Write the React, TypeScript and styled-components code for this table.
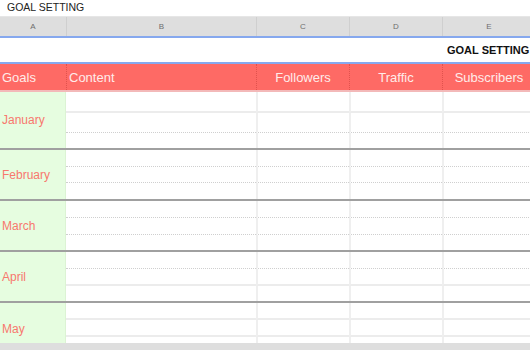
import React from "react";
import styled, { createGlobalStyle } from "styled-components";

const Global = createGlobalStyle`
  html, body { margin: 0; padding: 0; background: #ffffff; }
  body { font-family: "Liberation Sans", Arial, sans-serif; overflow: hidden; }
  #root { width: 530px; height: 350px; overflow: hidden; }
`;

const COLS = "66px 190px 93px 93px 93px";

const Page = styled.div`
  position: relative;
  width: 530px;
  height: 350px;
  overflow: hidden;
  display: flex;
  flex-direction: column;
  background: #fff;
`;

const Title = styled.div`
  height: 16px;
  flex: none;
  padding-left: 7px;
  font-size: 10.5px;
  line-height: 14px;
  color: #222;
  white-space: nowrap;
`;

const Sheet = styled.div`
  width: 535px;
  flex: 1;
  display: flex;
  flex-direction: column;
  min-height: 0;
  overflow: hidden;
`;

const LetterRow = styled.div`
  display: grid;
  grid-template-columns: ${COLS};
  height: 19px;
  flex: none;
  background: #dedede;
  border-top: 1px solid #e6e6e6;
`;

const Letter = styled.div<{ $first?: boolean }>`
  display: flex;
  align-items: center;
  justify-content: center;
  font-size: 8px;
  color: #6e6e6e;
  border-left: ${(p) => (p.$first ? "none" : "1px solid #cfcfcf")};
`;

const BannerRow = styled.div`
  height: 24px;
  flex: none;
  border-top: 2px solid #86a8ee;
  border-bottom: 2px solid #86a8ee;
  display: flex;
  align-items: center;
  padding-left: 447px;
  font-size: 11px;
  font-weight: 700;
  color: #111;
  white-space: nowrap;
  overflow: hidden;
`;

const HeadRow = styled.div`
  display: grid;
  grid-template-columns: ${COLS};
  height: 26px;
  flex: none;
  background: #fe6a65;
  border-bottom: 2px solid #f3b9b9;
`;

const HeadCell = styled.div<{ $align?: "left" | "center"; $first?: boolean }>`
  display: flex;
  align-items: center;
  justify-content: ${(p) => (p.$align === "left" ? "flex-start" : "center")};
  padding-left: ${(p) => (p.$align === "left" ? "2px" : "0")};
  font-size: 13px;
  color: #ffecea;
  border-left: ${(p) => (p.$first ? "none" : "1px dotted #e0524d")};
  white-space: nowrap;
`;

const Group = styled.div<{ $rows: string; $last?: boolean }>`
  display: grid;
  grid-template-columns: ${COLS};
  grid-template-rows: ${(p) => p.$rows};
  flex: none;
  border-bottom: ${(p) => (p.$last ? "none" : "2px solid #a0a0a0")};
`;

const Month = styled.div`
  grid-column: 1;
  grid-row: 1 / -1;
  background: #e6fde0;
  border-right: 1px solid #dcf3d4;
  display: flex;
  align-items: center;
  padding-left: 2px;
  font-size: 12px;
  color: #f8786e;
`;

const Cell = styled.div<{ $line: "solid" | "dotted" | "none"; $first?: boolean }>`
  border-left: ${(p) => (p.$first ? "none" : "2px solid #efefef")};
  border-bottom: ${(p) =>
    p.$line === "solid"
      ? "2px solid #ececec"
      : p.$line === "dotted"
      ? "1px dotted #cfcfcf"
      : "none"};
`;

const Scrollbar = styled.div`
  position: absolute;
  left: 0;
  right: 0;
  bottom: 0;
  height: 7px;
  background: #dedede;
`;

type Line = "solid" | "dotted" | "none";
type G = { name: string; rows: string; lines: Line[]; last?: boolean };

const groups: G[] = [
  { name: "January", rows: "21px 20px 15px", lines: ["solid", "dotted", "none"] },
  { name: "February", rows: "17px 16px 16px", lines: ["dotted", "dotted", "none"] },
  { name: "March", rows: "17px 17px 15px", lines: ["dotted", "dotted", "none"] },
  { name: "April", rows: "17px 17px 15px", lines: ["dotted", "solid", "none"] },
  { name: "May", rows: "17px 17px 17px", lines: ["solid", "solid", "none"], last: true },
];

const dataCols = [0, 1, 2, 3];

const App: React.FC = () => (
  <Page>
    <Global />
    <Title>GOAL SETTING</Title>
    <Sheet>
      <LetterRow>
        {["A", "B", "C", "D", "E"].map((l, i) => (
          <Letter key={l} $first={i === 0}>
            {l}
          </Letter>
        ))}
      </LetterRow>
      <BannerRow>GOAL SETTING</BannerRow>
      <HeadRow>
        <HeadCell $align="left" $first>
          Goals
        </HeadCell>
        <HeadCell $align="left">Content</HeadCell>
        <HeadCell>Followers</HeadCell>
        <HeadCell>Traffic</HeadCell>
        <HeadCell>Subscribers</HeadCell>
      </HeadRow>
      {groups.map((g) => (
        <Group key={g.name} $rows={g.rows} $last={g.last}>
          <Month>{g.name}</Month>
          {g.lines.map((ln, r) =>
            dataCols.map((c) => (
              <Cell
                key={`${r}-${c}`}
                $line={ln}
                $first={c === 0}
                style={{ gridRow: r + 1, gridColumn: c + 2 }}
              />
            ))
          )}
        </Group>
      ))}
    </Sheet>
    <Scrollbar />
  </Page>
);

export default App;
